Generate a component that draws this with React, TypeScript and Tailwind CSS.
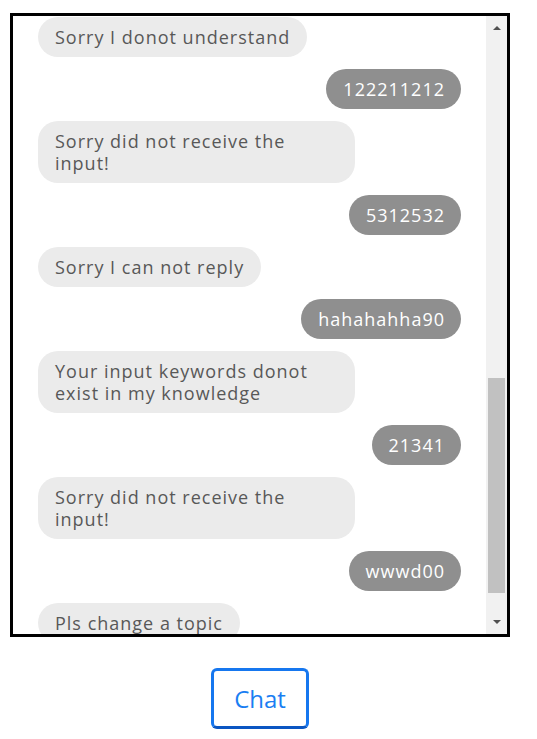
import React from "react";

type Msg = { side: "l" | "r"; text: string };

const messages: Msg[] = [
  { side: "l", text: "Sorry I donot understand" },
  { side: "r", text: "122211212" },
  { side: "l", text: "Sorry did not receive the input!" },
  { side: "r", text: "5312532" },
  { side: "l", text: "Sorry I can not reply" },
  { side: "r", text: "hahahahha90" },
  { side: "l", text: "Your input keywords donot exist in my knowledge" },
  { side: "r", text: "21341" },
  { side: "l", text: "Sorry did not receive the input!" },
  { side: "r", text: "wwwd00" },
  { side: "l", text: "Pls change a topic" },
];

export default function App() {
  return (
    <div className="bg-white w-[537px] h-[739px] pt-[13px] pl-[10px]" style={{ fontFamily: '"Open Sans", sans-serif' }}>
      <div className="w-[500px] h-[624px] border-[3px] border-black flex">
        <div className="flex-1 overflow-hidden flex flex-col gap-[12px] px-[25px] pt-[1px]">
          {messages.map((m, i) =>
            m.side === "l" ? (
              <div key={i} className="flex justify-start shrink-0">
                <div className="max-w-[317px] bg-[#ebebeb] text-[#585858] rounded-[20px] px-[17px] py-[9px] text-[18px] leading-[22px] tracking-[1px]">
                  {m.text}
                </div>
              </div>
            ) : (
              <div key={i} className="flex justify-end shrink-0">
                <div className="max-w-[317px] bg-[#8f8f8f] text-white rounded-[20px] pl-[17px] pr-[16px] py-[9px] text-[18px] leading-[22px] tracking-[1px]">
                  {m.text}
                </div>
              </div>
            )
          )}
        </div>
        <div className="w-[21px] bg-[#f1f1f1] flex flex-col shrink-0">
          <div className="h-[24px] flex items-center justify-center">
            <div className="w-0 h-0 border-l-[4.5px] border-r-[4.5px] border-b-[4.5px] border-l-transparent border-r-transparent border-b-[#505050]" />
          </div>
          <div className="flex-1">
            <div className="mt-[338px] h-[215px] mx-[2px] bg-[#c1c1c1]" />
          </div>
          <div className="h-[24px] flex items-center justify-center">
            <div className="w-0 h-0 border-l-[4.5px] border-r-[4.5px] border-t-[4.5px] border-l-transparent border-r-transparent border-t-[#505050]" />
          </div>
        </div>
      </div>
      <div className="w-[500px] flex justify-center mt-[31px]">
        <button className="w-[98px] h-[61px] border-[3px] border-[#1677ef] border-b-[#0a56c2] rounded-[6px] text-[24px] text-[#1a7ef2] bg-white">
          Chat
        </button>
      </div>
    </div>
  );
}
